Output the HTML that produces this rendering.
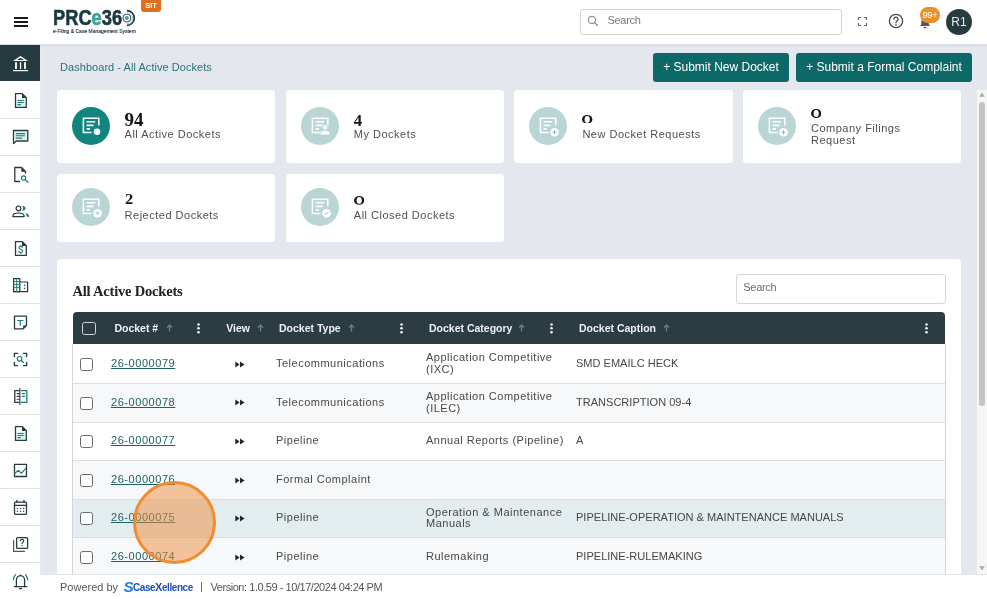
<!DOCTYPE html>
<html><head><meta charset="utf-8">
<style>
*{box-sizing:border-box;margin:0;padding:0}
html,body{width:987px;height:599px;overflow:hidden;background:#e4e8ee;font-family:"Liberation Sans",sans-serif;position:relative}
.abs{position:absolute}
#header{position:absolute;left:0;top:0;width:987px;height:45px;background:#fff;z-index:5;border-bottom:1px solid #d9dde2;box-shadow:0 1px 2px rgba(0,0,0,0.05)}
#sidebar{position:absolute;left:0;top:45px;width:40px;height:554px;background:#fff;z-index:4;border-right:0}
#sbedge{position:absolute;left:40px;top:45px;width:3px;height:554px;background:#e6e9ee;z-index:1}
.sitem{position:absolute;left:0;width:40px;height:38px;border-bottom:1px solid #e3e3e3}
.sic{position:absolute;left:8px;width:24px;height:24px}
.sic *{fill:none;stroke:#263b40;stroke-width:1.3;stroke-linecap:round;stroke-linejoin:round}
.sic .t{stroke:#1f7d73}
.sic .f{fill:#263b40;stroke:none}
.sic .ft{fill:#1f7d73;stroke:none}
.card{position:absolute;background:#fff;border-radius:3.5px}
.circ{position:absolute;width:37px;height:37px;border-radius:50%;background:#b9d5d6}
.circ svg{position:absolute;left:0;top:0}
.num{position:absolute;font-family:"Liberation Serif",serif;font-weight:bold;color:#161616;white-space:nowrap}
.lbl{position:absolute;font-size:11px;color:#4b5053;line-height:11px;letter-spacing:0.5px;white-space:nowrap}
.hd{font-size:10.5px;font-weight:bold;color:#eef2f3;line-height:10.5px;white-space:nowrap}
.cell{font-size:11px;line-height:11px;color:#474747;white-space:nowrap;letter-spacing:0.5px}
.lnk{color:#1d6262;text-decoration:underline;text-underline-offset:0.5px;letter-spacing:0.55px}
.btn{position:absolute;top:53px;height:29px;background:#0c6967;border-radius:3px;color:#fff;font-size:12px;line-height:29px;text-align:center;white-space:nowrap}
</style></head><body><div id="wrap" style="position:absolute;left:0;top:0;width:987px;height:599px;overflow:hidden;will-change:transform">
<div id="header">
  <div class="abs" style="left:14px;top:17px;width:14px;height:2px;background:#1a1a1a"></div>
  <div class="abs" style="left:14px;top:21px;width:14px;height:2px;background:#1a1a1a"></div>
  <div class="abs" style="left:14px;top:25px;width:14px;height:2px;background:#1a1a1a"></div>
  <div class="abs" style="left:53px;top:8.3px;font-size:21.5px;font-weight:bold;color:#1b3940;line-height:21.5px;white-space:nowrap;transform:scaleX(0.85);transform-origin:0 0;-webkit-text-stroke:0.6px #1b3940">PRC<span style="color:#37a39b;-webkit-text-stroke:0.6px #37a39b">e</span>36</div>
  <svg class="abs" style="left:117px;top:8px" width="20" height="20" viewBox="0 0 20 20">
    <path d="M9.9 2.6 A7.4 7.4 0 0 1 9.9 17.4" fill="none" stroke="#1b3940" stroke-width="1.7"/>
    <path d="M9.9 4.3 A5.7 5.7 0 0 1 9.9 15.7" fill="none" stroke="#8a9a9e" stroke-width="0.6"/>
    <circle cx="9.9" cy="10" r="4" fill="none" stroke="#1b3940" stroke-width="0.9"/>
    <circle cx="9.9" cy="10" r="2" fill="#37a39b"/>
  </svg>
  <div class="abs" style="left:53px;top:28px;font-size:5px;color:#2a3a3f;white-space:nowrap;line-height:6px;letter-spacing:0px;-webkit-text-stroke:0.15px #2a3a3f">e-Filing &amp; Case Management System</div>
  <div class="abs" style="left:141px;top:0;width:20px;height:12px;background:#e06e1c;border-radius:0 0 3px 3px;color:#fff;font-size:7.5px;font-weight:bold;text-align:center;line-height:11px">SIT</div>
  <div class="abs" style="left:580px;top:9px;width:262px;height:26px;border:1px solid #d4d4d4;border-radius:3px"></div>
  <svg class="abs" style="left:586px;top:14px" width="14" height="14" viewBox="0 0 14 14"><circle cx="5.9" cy="5.9" r="3.7" fill="none" stroke="#7a7a7a" stroke-width="1"/><path d="M8.6 8.6 L11.4 11.4" stroke="#7a7a7a" stroke-width="1.3" stroke-linecap="round"/></svg>
  <div class="abs" style="left:607.5px;top:14.7px;font-size:11px;color:#7a7a7a;line-height:11px;letter-spacing:-0.3px">Search</div>
  <svg class="abs" style="left:856px;top:15px" width="13" height="13" viewBox="0 0 13 13"><path d="M2.5 5 V2.5 H5 M8 2.5 H10.5 V5 M10.5 8 V10.5 H8 M5 10.5 H2.5 V8" fill="none" stroke="#666" stroke-width="1.2"/></svg>
  <svg class="abs" style="left:888px;top:13px" width="16" height="16" viewBox="0 0 16 16"><circle cx="8" cy="8" r="6.6" fill="none" stroke="#4a4a4a" stroke-width="1.3"/><path d="M5.9 6.3 A2.1 2.1 0 1 1 8.8 8.2 C8.1 8.6 8 9 8 9.8" fill="none" stroke="#4a4a4a" stroke-width="1.3" stroke-linecap="round"/><circle cx="8" cy="11.7" r="0.8" fill="#4a4a4a"/></svg>
  <svg class="abs" style="left:917px;top:14px" width="16" height="16" viewBox="0 0 16 16"><path d="M3 12 C4 11 4.5 9.5 4.5 7 A3.5 3.5 0 0 1 11.5 7 C11.5 9.5 12 11 13 12 Z" fill="#555"/><path d="M6.5 13.6 H9.5" stroke="#555" stroke-width="1.2"/></svg>
  <div class="abs" style="left:920px;top:7px;width:20px;height:16px;border-radius:8px;background:#e8902a;color:#fff;font-size:9.5px;text-align:center;line-height:16px;letter-spacing:-0.3px">99+</div>
  <div class="abs" style="left:946px;top:9px;width:26px;height:26px;border-radius:50%;background:#263a40;color:#e6eef0;font-size:12px;text-align:center;line-height:26px">R1</div>
</div>

<div id="sbedge"></div>
<div id="sidebar">
<div class="sitem" style="top:0px;background:#263b40;height:35.5px;border-bottom:none;"></div>
<svg class="sic" style="top:6px" viewBox="0 0 24 24" width="24" height="24"><path d="M5 10 L12.5 5 L20 10 Z" style="fill:#fff;stroke:none"/><path d="M8.8 8.9 L12.5 6.8 L16.2 8.9 Z" style="fill:#263b40;stroke:none"/>
 <rect x="7.1" y="11.2" width="1.8" height="6.8" style="fill:#fff;stroke:none"/><rect x="11.9" y="11.2" width="1.3" height="6.8" style="fill:#fff;stroke:none"/><rect x="16.1" y="11.2" width="1.8" height="6.8" style="fill:#fff;stroke:none"/>
 <rect x="5" y="19" width="15" height="1.2" style="fill:#fff;stroke:none"/></svg>
<div class="sitem" style="top:36.3px;height:37.5px;"></div>
<svg class="sic" style="top:43px" viewBox="0 0 24 24" width="24" height="24"><rect x="8.3" y="11" width="9.2" height="7.7" style="fill:#dcf4f1;stroke:none"/><path d="M7.5 5.6 H14.3 L18.3 9.6 V19.4 H7.5 Z"/><path class="f" d="M14 5.3 L18.6 9.9 H14 Z"/>
 <path class="t" d="M10 12.5 H15.3 M10 14.5 H15.3 M10 16.6 H12.5" style="stroke-width:1.1"/></svg>
<div class="sitem" style="top:73.3px;height:37.5px;"></div>
<svg class="sic" style="top:80px" viewBox="0 0 24 24" width="24" height="24"><rect x="6.3" y="6.3" width="12.7" height="9" style="fill:#dcf4f1;stroke:none"/><path d="M5.5 5.5 H19.8 V16 H8.2 L5.5 18.6 Z"/><path class="t" d="M8.3 8.6 H16.6 M8.3 10.7 H16.6 M8.3 13.1 H13.8" style="stroke-width:1.1"/></svg>
<div class="sitem" style="top:110.3px;height:37.5px;"></div>
<svg class="sic" style="top:117px" viewBox="0 0 24 24" width="24" height="24"><path d="M11.5 19.5 H6.8 V5.5 H13.5 L17.5 9.5 V11"/><path class="f" d="M13.3 5.2 L17.8 9.7 H13.3 Z"/>
 <circle class="t" cx="15.6" cy="16" r="2.1" style="stroke-width:1.2"/><path class="t" d="M17.2 17.6 L20 20.3" style="stroke-width:1.3"/></svg>
<div class="sitem" style="top:147.3px;height:37.5px;"></div>
<svg class="sic" style="top:154px" viewBox="0 0 24 24" width="24" height="24"><circle cx="10.5" cy="9.4" r="2.4" style="stroke-width:1.2"/><path d="M4.8 17.6 C4.8 14.8 7 14 10.5 14 C14 14 16.2 14.8 16.2 17.6 Z" style="stroke-width:1.2"/>
 <path class="ft" d="M14.2 6.7 C16.7 6.9 17.6 8.3 17.6 9.3 C17.6 10.4 16.7 11.8 14.2 12 C14.9 11.1 15.1 10.2 15.1 9.3 C15.1 8.5 14.9 7.6 14.2 6.7 Z"/>
 <path class="ft" d="M17.2 13.9 C19.9 14.3 21.1 15.8 21.2 17.8 H18.7 C18.6 16.3 18.2 15 17.2 13.9 Z"/></svg>
<div class="sitem" style="top:184.3px;height:37.5px;"></div>
<svg class="sic" style="top:191px" viewBox="0 0 24 24" width="24" height="24"><path d="M7.5 5.6 H14.3 L18.3 9.6 V19.4 H7.5 Z"/><path class="f" d="M14 5.3 L18.6 9.9 H14 Z"/>
 <path class="t" d="M14.6 11.2 C14.4 10.6 13.8 10.3 12.8 10.3 C11.7 10.3 11 10.9 11 11.7 C11 13.6 14.8 12.8 14.8 14.9 C14.8 15.8 14 16.4 12.8 16.4 C11.8 16.4 11.1 16 10.9 15.3 M12.8 9.3 V10.3 M12.8 16.4 V17.4" style="stroke-width:1.2"/></svg>
<div class="sitem" style="top:221.3px;height:37.5px;"></div>
<svg class="sic" style="top:228px" viewBox="0 0 24 24" width="24" height="24"><path d="M5.6 18.6 V5.6 H11.8 V18.6 Z" style="stroke-width:1.2"/><path d="M11.8 9 H19.6 V18.6 H5.6" style="stroke-width:1.2"/>
 <path d="M8.7 5.6 V18.6 M5.6 8.6 H11.8 M5.6 11.6 H11.8 M5.6 14.6 H11.8" class="t" style="stroke-width:1"/>
 <circle class="f" cx="16.5" cy="12.3" r="0.75"/><circle class="f" cx="16.5" cy="15.2" r="0.75"/></svg>
<div class="sitem" style="top:258.3px;height:37.5px;"></div>
<svg class="sic" style="top:265px" viewBox="0 0 24 24" width="24" height="24"><path d="M6.5 6.2 H18.5 V15.5 L15.2 18.8 H6.5 Z"/><path class="f" d="M15.2 19 V15.5 H18.7 Z"/>
 <path class="t" d="M9.6 10.5 H15 M12.3 10.5 V15.2" style="stroke-width:1.2"/></svg>
<div class="sitem" style="top:295.3px;height:37.5px;"></div>
<svg class="sic" style="top:302px" viewBox="0 0 24 24" width="24" height="24"><path d="M6.4 9.6 V6.4 H9.6 M15.4 6.4 H18.6 V9.6 M6.4 15.4 V18.6 H9.6 M15.4 18.6 H18.6 V15.4" style="stroke-width:1.4"/>
 <circle class="t" cx="11.6" cy="11.8" r="2.3" style="stroke-width:1.2"/><path class="t" d="M13.3 13.5 L15.4 15.5" style="stroke-width:1.3"/></svg>
<div class="sitem" style="top:332.3px;height:37.5px;"></div>
<svg class="sic" style="top:339px" viewBox="0 0 24 24" width="24" height="24"><path d="M11.9 4.4 V20.6" style="stroke:#555;stroke-width:1.2"/><path d="M11.5 6.6 H6.8 V18.4 H11.5"/>
 <path d="M9.1 9.6 H11.5 M9.1 12.4 H11.5 M9.1 15.2 H11.5" style="stroke-width:1.1"/>
 <path class="t" d="M13.5 6.6 H18.8 V18.4 H13.5"/><path class="t" d="M14.2 9.6 H16.7 M14.2 12.4 H16.7" style="stroke-width:1.1"/></svg>
<div class="sitem" style="top:369.3px;height:37.5px;"></div>
<svg class="sic" style="top:376px" viewBox="0 0 24 24" width="24" height="24"><rect x="8.3" y="11" width="9.2" height="7.7" style="fill:#dcf4f1;stroke:none"/><path d="M7.5 5.6 H14.3 L18.3 9.6 V19.4 H7.5 Z"/><path class="f" d="M14 5.3 L18.6 9.9 H14 Z"/>
 <path class="t" d="M10 12.5 H15.3 M10 14.5 H15.3 M10 16.6 H12.5" style="stroke-width:1.1"/></svg>
<div class="sitem" style="top:406.3px;height:37.5px;"></div>
<svg class="sic" style="top:413px" viewBox="0 0 24 24" width="24" height="24"><rect x="6.5" y="6.3" width="12" height="12.2"/><path class="t" d="M7 15.4 L10.4 12.3 L13.4 15.3 L18 10.1" style="stroke-width:1.2"/></svg>
<div class="sitem" style="top:443.3px;height:37.5px;"></div>
<svg class="sic" style="top:450px" viewBox="0 0 24 24" width="24" height="24"><rect x="6.5" y="7.2" width="12" height="12.2" rx="1"/><path d="M6.5 10.3 H18.5 M9 5.3 V7.4 M16 5.3 V7.4"/>
 <circle class="f" cx="9.4" cy="13.4" r="0.7"/><circle class="f" cx="12.5" cy="13.4" r="0.7"/><circle class="f" cx="15.6" cy="13.4" r="0.7"/>
 <circle class="f" cx="9.4" cy="16.3" r="0.7"/><circle class="f" cx="12.5" cy="16.3" r="0.7"/><circle class="f" cx="15.6" cy="16.3" r="0.7"/></svg>
<div class="sitem" style="top:480.3px;height:37.5px;"></div>
<svg class="sic" style="top:487px" viewBox="0 0 24 24" width="24" height="24"><rect x="8.6" y="5.6" width="11" height="10.8" rx="1"/><path d="M5.6 8.6 V19.4 H16.4" style="stroke:#555;stroke-width:1.2"/>
 <path d="M12.3 8.7 C12.5 7.8 13.2 7.4 14 7.4 C15 7.4 15.7 8 15.7 8.9 C15.7 10.2 14 10.3 14 11.8" style="stroke-width:1.1"/><circle class="f" cx="14" cy="13.6" r="0.65"/></svg>
<div class="sitem" style="top:517.3px;height:37.5px;"></div>
<svg class="sic" style="top:524px" viewBox="0 0 24 24" width="24" height="24"><path d="M8.4 17.5 V11.2 C8.4 8.6 10.2 6.6 12.5 6.6 C14.8 6.6 16.6 8.6 16.6 11.2 V17.5"/><path d="M6.2 17.6 H18.8 M11.4 19.6 H13.6" style="stroke-width:1.2"/>
 <path class="f" d="M11.6 6.8 L12.5 5 L13.4 6.8 Z"/>
 <path class="t" d="M5.3 10.6 C5.6 8.6 6.3 7 7.5 5.6 M19.7 10.6 C19.4 8.6 18.7 7 17.5 5.6" style="stroke-width:1.2"/></svg>
</div>

<div class="abs" style="left:60px;top:62px;font-size:11px;color:#2b7078;line-height:11px;white-space:nowrap;letter-spacing:0.05px">Dashboard - All Active Dockets</div>
<div class="btn" style="left:653px;width:136px">+ Submit New Docket</div>
<div class="btn" style="left:796px;width:176px">+ Submit a Formal Complaint</div>

<div class="card" style="left:57px;top:90px;width:218px;height:73px"></div>
<div class="circ" style="left:72px;top:107px;background:#138581;width:38px;height:38px"><svg width="38" height="38" viewBox="0 0 38 38"><path d="M19.5 25.6 H11.4 V11.2 H26.8 V18.5" fill="none" stroke="#fff" stroke-width="1.5"/><path d="M14.6 14.8 H23.2 M14.6 18.4 H21.5 M14.6 21.9 H18" fill="none" stroke="#fff" stroke-width="1.6"/><circle cx="25" cy="24.8" r="3.3" fill="#fff"/></svg></div>
<div class="num" style="left:124.6px;top:111.04px;font-size:18.93px;line-height:18.93px;">94</div>
<div class="lbl" style="left:124.6px;top:129.09px">All Active Dockets</div>
<div class="card" style="left:286px;top:90px;width:218px;height:73px"></div>
<div class="circ" style="left:301px;top:107px;background:#b9d5d6;width:38px;height:38px"><svg width="38" height="38" viewBox="0 0 38 38"><path d="M19.5 25.6 H11.4 V11.2 H26.8 V18.5" fill="none" stroke="#fff" stroke-width="1.5"/><path d="M14.6 14.8 H23.2 M14.6 18.4 H21.5 M14.6 21.9 H18" fill="none" stroke="#fff" stroke-width="1.6"/><circle cx="24" cy="20.5" r="2.2" fill="#fff"/><path d="M19.4 27.6 C19.4 24.6 21.4 23.8 24 23.8 C26.6 23.8 28.6 24.6 28.6 27.6 Z" fill="#fff"/></svg></div>
<div class="num" style="left:353.8px;top:112.60px;font-size:16.72px;line-height:16.72px;">4</div>
<div class="lbl" style="left:353.8px;top:129.09px">My Dockets</div>
<div class="card" style="left:514px;top:90px;width:219px;height:73px"></div>
<div class="circ" style="left:529px;top:107px;background:#b9d5d6;width:38px;height:38px"><svg width="38" height="38" viewBox="0 0 38 38"><path d="M19.5 25.6 H11.4 V11.2 H26.8 V18.5" fill="none" stroke="#fff" stroke-width="1.5"/><path d="M14.6 14.8 H23.2 M14.6 18.4 H21.5 M14.6 21.9 H18" fill="none" stroke="#fff" stroke-width="1.6"/><circle cx="25.5" cy="25.2" r="4.3" fill="#fff"/><path d="M25.5 23.1 V27.3 M23.4 25.2 H27.6" stroke="#9aa9ab" stroke-width="0.9"/></svg></div>
<svg class="abs" style="left:582.4px;top:114.6px" width="10.4" height="8.8" viewBox="0 0 10.4 8.8"><ellipse cx="5.2" cy="4.40" rx="5.2" ry="4.40" fill="#161616"/><ellipse cx="5.2" cy="4.40" rx="2.6" ry="3.40" fill="#fff"/></svg>
<div class="lbl" style="left:582.4px;top:129.19px">New Docket Requests</div>
<div class="card" style="left:743px;top:90px;width:218px;height:73px"></div>
<div class="circ" style="left:758px;top:107px;background:#b9d5d6;width:38px;height:38px"><svg width="38" height="38" viewBox="0 0 38 38"><path d="M19.5 25.6 H11.4 V11.2 H26.8 V18.5" fill="none" stroke="#fff" stroke-width="1.5"/><path d="M14.6 14.8 H23.2 M14.6 18.4 H21.5 M14.6 21.9 H18" fill="none" stroke="#fff" stroke-width="1.6"/><circle cx="25.5" cy="25.2" r="4.3" fill="#fff"/><path d="M25.5 23.1 V27.3 M23.4 25.2 H27.6" stroke="#9aa9ab" stroke-width="0.9"/></svg></div>
<svg class="abs" style="left:811.0px;top:108.5px" width="10.4" height="9.1" viewBox="0 0 10.4 9.1"><ellipse cx="5.2" cy="4.55" rx="5.2" ry="4.55" fill="#161616"/><ellipse cx="5.2" cy="4.55" rx="2.6" ry="3.55" fill="#fff"/></svg>
<div class="lbl" style="left:811px;top:123.19px">Company Filings</div>
<div class="lbl" style="left:811px;top:134.79px">Request</div>
<div class="card" style="left:57px;top:174px;width:218px;height:68px"></div>
<div class="circ" style="left:72px;top:188px;background:#b9d5d6;width:38px;height:38px"><svg width="38" height="38" viewBox="0 0 38 38"><path d="M19.5 25.6 H11.4 V11.2 H26.8 V18.5" fill="none" stroke="#fff" stroke-width="1.5"/><path d="M14.6 14.8 H23.2 M14.6 18.4 H21.5 M14.6 21.9 H18" fill="none" stroke="#fff" stroke-width="1.6"/><circle cx="25.5" cy="25.2" r="4.3" fill="#fff"/><path d="M24 23.7 L27 26.7 M27 23.7 L24 26.7" stroke="#9aa9ab" stroke-width="0.9"/></svg></div>
<div class="num" style="left:124.6px;top:193.37px;font-size:13.77px;line-height:13.77px;transform:scaleX(1.2);transform-origin:0 0;">2</div>
<div class="lbl" style="left:124.6px;top:210.29px">Rejected Dockets</div>
<div class="card" style="left:286px;top:174px;width:218px;height:68px"></div>
<div class="circ" style="left:301px;top:188px;background:#b9d5d6;width:38px;height:38px"><svg width="38" height="38" viewBox="0 0 38 38"><path d="M19.5 25.6 H11.4 V11.2 H26.8 V18.5" fill="none" stroke="#fff" stroke-width="1.5"/><path d="M14.6 14.8 H23.2 M14.6 18.4 H21.5 M14.6 21.9 H18" fill="none" stroke="#fff" stroke-width="1.6"/><circle cx="25.5" cy="25.2" r="4.3" fill="#fff"/><path d="M23.6 25.3 L25 26.6 L27.5 23.8" fill="none" stroke="#9aa9ab" stroke-width="0.9"/></svg></div>
<svg class="abs" style="left:353.8px;top:196.0px" width="10.4" height="8.8" viewBox="0 0 10.4 8.8"><ellipse cx="5.2" cy="4.40" rx="5.2" ry="4.40" fill="#161616"/><ellipse cx="5.2" cy="4.40" rx="2.6" ry="3.40" fill="#fff"/></svg>
<div class="lbl" style="left:353.8px;top:210.29px">All Closed Dockets</div>

<div class="card" style="left:57px;top:259px;width:904px;height:340px"></div>
<div class="abs" style="left:72.5px;top:283.5px;font-family:'Liberation Serif',serif;font-weight:bold;font-size:14.5px;line-height:14.5px;color:#222;letter-spacing:-0.2px;white-space:nowrap">All Active Dockets</div>
<div class="abs" style="left:736px;top:274px;width:210px;height:29.5px;border:1px solid #d6d6d6;border-radius:3px"></div>
<div class="abs" style="left:743.3px;top:281.59px;font-size:11px;line-height:11px;color:#6d6d6d;letter-spacing:-0.3px">Search</div>
<div class="abs" style="left:72.5px;top:312px;width:872.5px;height:32.8px;background:#2b3d42;border-radius:4px 4px 0 0"></div>
<div class="abs" style="left:82px;top:322px;width:13.5px;height:13px;border:1.3px solid #cfd6d8;border-radius:2.5px"></div>
<div class="abs hd" style="left:114.4px;top:322.6px">Docket #</div>
<svg class="abs" style="left:165.5px;top:324px" width="7" height="8" viewBox="0 0 7 8"><path d="M3.5 1 V7.5 M1 3.6 L3.5 1 L6 3.6" fill="none" stroke="#6f8084" stroke-width="1.3"/></svg>
<svg class="abs" style="left:197.2px;top:323px" width="3" height="11" viewBox="0 0 3 11"><circle cx="1.5" cy="1.4" r="1.25" fill="#fff"/><circle cx="1.5" cy="5.3" r="1.25" fill="#fff"/><circle cx="1.5" cy="9.2" r="1.25" fill="#fff"/></svg>
<div class="abs hd" style="left:226.3px;top:322.6px">View</div>
<svg class="abs" style="left:257px;top:324px" width="7" height="8" viewBox="0 0 7 8"><path d="M3.5 1 V7.5 M1 3.6 L3.5 1 L6 3.6" fill="none" stroke="#6f8084" stroke-width="1.3"/></svg>
<div class="abs hd" style="left:279px;top:322.6px">Docket Type</div>
<svg class="abs" style="left:347.5px;top:324px" width="7" height="8" viewBox="0 0 7 8"><path d="M3.5 1 V7.5 M1 3.6 L3.5 1 L6 3.6" fill="none" stroke="#6f8084" stroke-width="1.3"/></svg>
<svg class="abs" style="left:400.2px;top:323px" width="3" height="11" viewBox="0 0 3 11"><circle cx="1.5" cy="1.4" r="1.25" fill="#fff"/><circle cx="1.5" cy="5.3" r="1.25" fill="#fff"/><circle cx="1.5" cy="9.2" r="1.25" fill="#fff"/></svg>
<div class="abs hd" style="left:429px;top:322.6px">Docket Category</div>
<svg class="abs" style="left:518px;top:324px" width="7" height="8" viewBox="0 0 7 8"><path d="M3.5 1 V7.5 M1 3.6 L3.5 1 L6 3.6" fill="none" stroke="#6f8084" stroke-width="1.3"/></svg>
<svg class="abs" style="left:550.3px;top:323px" width="3" height="11" viewBox="0 0 3 11"><circle cx="1.5" cy="1.4" r="1.25" fill="#fff"/><circle cx="1.5" cy="5.3" r="1.25" fill="#fff"/><circle cx="1.5" cy="9.2" r="1.25" fill="#fff"/></svg>
<div class="abs hd" style="left:579px;top:322.6px">Docket Caption</div>
<svg class="abs" style="left:663px;top:324px" width="7" height="8" viewBox="0 0 7 8"><path d="M3.5 1 V7.5 M1 3.6 L3.5 1 L6 3.6" fill="none" stroke="#6f8084" stroke-width="1.3"/></svg>
<svg class="abs" style="left:925.3px;top:323px" width="3" height="11" viewBox="0 0 3 11"><circle cx="1.5" cy="1.4" r="1.25" fill="#fff"/><circle cx="1.5" cy="5.3" r="1.25" fill="#fff"/><circle cx="1.5" cy="9.2" r="1.25" fill="#fff"/></svg>
<div class="abs" style="left:72px;top:344px;width:874px;height:240px;border-left:1px solid #d3d6d8;border-right:1px solid #d3d6d8"></div>
<div class="abs" style="left:73px;top:344px;width:872px;height:40px;background:#ffffff;border-bottom:1px solid #dcdfe1"></div>
<div class="abs" style="left:79.5px;top:358.0px;width:13.5px;height:13px;border:1.3px solid #6b6b6b;border-radius:2.5px;background:#fff"></div>
<div class="abs cell lnk" style="left:111px;top:357.6px">26-0000079</div>
<svg class="abs" style="left:235px;top:360.5px" width="10" height="7" viewBox="0 0 10 7"><path d="M0.3 0.4 L4.6 3.5 L0.3 6.6 Z M5 0.4 L9.6 3.5 L5 6.6 Z" fill="#1d2830"/></svg>
<div class="abs cell" style="left:276px;top:357.6px">Telecommunications</div>
<div class="abs cell" style="left:426px;top:352.4px">Application Competitive</div>
<div class="abs cell" style="left:426px;top:363.7px">(IXC)</div>
<div class="abs cell" style="left:576px;top:357.6px;letter-spacing:0.02px">SMD EMAILC HECK</div>
<div class="abs" style="left:73px;top:384px;width:872px;height:39px;background:#f7f8fa;border-bottom:1px solid #dcdfe1"></div>
<div class="abs" style="left:79.5px;top:396.9px;width:13.5px;height:13px;border:1.3px solid #6b6b6b;border-radius:2.5px;background:#fff"></div>
<div class="abs cell lnk" style="left:111px;top:396.5px">26-0000078</div>
<svg class="abs" style="left:235px;top:399.4px" width="10" height="7" viewBox="0 0 10 7"><path d="M0.3 0.4 L4.6 3.5 L0.3 6.6 Z M5 0.4 L9.6 3.5 L5 6.6 Z" fill="#1d2830"/></svg>
<div class="abs cell" style="left:276px;top:396.5px">Telecommunications</div>
<div class="abs cell" style="left:426px;top:391.3px">Application Competitive</div>
<div class="abs cell" style="left:426px;top:402.6px">(ILEC)</div>
<div class="abs cell" style="left:576px;top:396.5px;letter-spacing:0.02px">TRANSCRIPTION 09-4</div>
<div class="abs" style="left:73px;top:423px;width:872px;height:38px;background:#ffffff;border-bottom:1px solid #dcdfe1"></div>
<div class="abs" style="left:79.5px;top:435.4px;width:13.5px;height:13px;border:1.3px solid #6b6b6b;border-radius:2.5px;background:#fff"></div>
<div class="abs cell lnk" style="left:111px;top:435.0px">26-0000077</div>
<svg class="abs" style="left:235px;top:437.9px" width="10" height="7" viewBox="0 0 10 7"><path d="M0.3 0.4 L4.6 3.5 L0.3 6.6 Z M5 0.4 L9.6 3.5 L5 6.6 Z" fill="#1d2830"/></svg>
<div class="abs cell" style="left:276px;top:435.0px">Pipeline</div>
<div class="abs cell" style="left:426px;top:435.0px">Annual Reports (Pipeline)</div>
<div class="abs cell" style="left:576px;top:435.0px;letter-spacing:0.02px">A</div>
<div class="abs" style="left:73px;top:461px;width:872px;height:39px;background:#f7f8fa;border-bottom:1px solid #dcdfe1"></div>
<div class="abs" style="left:79.5px;top:474.3px;width:13.5px;height:13px;border:1.3px solid #6b6b6b;border-radius:2.5px;background:#fff"></div>
<div class="abs cell lnk" style="left:111px;top:473.9px">26-0000076</div>
<svg class="abs" style="left:235px;top:476.8px" width="10" height="7" viewBox="0 0 10 7"><path d="M0.3 0.4 L4.6 3.5 L0.3 6.6 Z M5 0.4 L9.6 3.5 L5 6.6 Z" fill="#1d2830"/></svg>
<div class="abs cell" style="left:276px;top:473.9px">Formal Complaint</div>
<div class="abs" style="left:73px;top:500px;width:872px;height:38px;background:#e3ecee;border-bottom:1px solid #dcdfe1"></div>
<div class="abs" style="left:79.5px;top:512.4px;width:13.5px;height:13px;border:1.3px solid #6b6b6b;border-radius:2.5px;background:#fff"></div>
<div class="abs cell lnk" style="left:111px;top:512.0px">26-0000075</div>
<svg class="abs" style="left:235px;top:514.9px" width="10" height="7" viewBox="0 0 10 7"><path d="M0.3 0.4 L4.6 3.5 L0.3 6.6 Z M5 0.4 L9.6 3.5 L5 6.6 Z" fill="#1d2830"/></svg>
<div class="abs cell" style="left:276px;top:512.0px">Pipeline</div>
<div class="abs cell" style="left:426px;top:506.8px">Operation &amp; Maintenance</div>
<div class="abs cell" style="left:426px;top:518.1px">Manuals</div>
<div class="abs cell" style="left:576px;top:512.0px;letter-spacing:0.02px">PIPELINE-OPERATION &amp; MAINTENANCE MANUALS</div>
<div class="abs" style="left:73px;top:538px;width:872px;height:39px;background:#f7f8fa;border-bottom:1px solid #dcdfe1"></div>
<div class="abs" style="left:79.5px;top:551.3px;width:13.5px;height:13px;border:1.3px solid #6b6b6b;border-radius:2.5px;background:#fff"></div>
<div class="abs cell lnk" style="left:111px;top:550.9px">26-0000074</div>
<svg class="abs" style="left:235px;top:553.8px" width="10" height="7" viewBox="0 0 10 7"><path d="M0.3 0.4 L4.6 3.5 L0.3 6.6 Z M5 0.4 L9.6 3.5 L5 6.6 Z" fill="#1d2830"/></svg>
<div class="abs cell" style="left:276px;top:550.9px">Pipeline</div>
<div class="abs cell" style="left:426px;top:550.9px">Rulemaking</div>
<div class="abs cell" style="left:576px;top:550.9px;letter-spacing:0.02px">PIPELINE-RULEMAKING</div>
<div class="abs" style="left:133px;top:481px;width:83px;height:83px;border-radius:50%;border:3px solid #f08c32;background:rgba(240,140,60,0.5);z-index:2"></div>
<div class="abs" style="left:977px;top:90px;width:10px;height:484px;background:#f6f6f6;z-index:2"></div>
<svg class="abs" style="left:977px;top:91px;z-index:2" width="10" height="7" viewBox="0 0 10 7"><path d="M2.2 5.8 L5 1.6 L7.8 5.8 Z" fill="#a8a8a8"/></svg>
<div class="abs" style="left:979px;top:102px;width:6px;height:304px;border-radius:3px;background:#c3c3c3;z-index:2"></div>
<svg class="abs" style="left:977px;top:565px;z-index:2" width="10" height="7" viewBox="0 0 10 7"><path d="M2.2 1.3 L5 5.5 L7.8 1.3 Z" fill="#a8a8a8"/></svg>

<div class="abs" style="left:40px;top:574px;width:947px;height:25px;background:#fff;z-index:3;border-top:1px solid #e3e5e8"></div>
<div class="abs" style="left:60px;top:581.5px;font-size:11px;line-height:11px;color:#555;white-space:nowrap;z-index:4">Powered by</div>
<div class="abs" style="left:123.5px;top:579.5px;z-index:4;font-size:14px;line-height:14px;font-weight:bold;font-style:italic;color:#1a7fe0;transform:scaleX(1.1)">S</div>
<div class="abs" style="left:133px;top:582px;font-size:10px;line-height:11px;color:#1f4fbf;white-space:nowrap;z-index:4;font-weight:bold;letter-spacing:-0.45px">Case<span style="font-size:11px">X</span>ellence</div>
<div class="abs" style="left:200px;top:581px;font-size:11px;line-height:11px;color:#555;white-space:nowrap;z-index:4">|</div>
<div class="abs" style="left:210.5px;top:581.5px;font-size:11px;line-height:11px;color:#555;white-space:nowrap;z-index:4;letter-spacing:-0.45px">Version: 1.0.59 - 10/17/2024 04:24 PM</div>
</div></body></html>
